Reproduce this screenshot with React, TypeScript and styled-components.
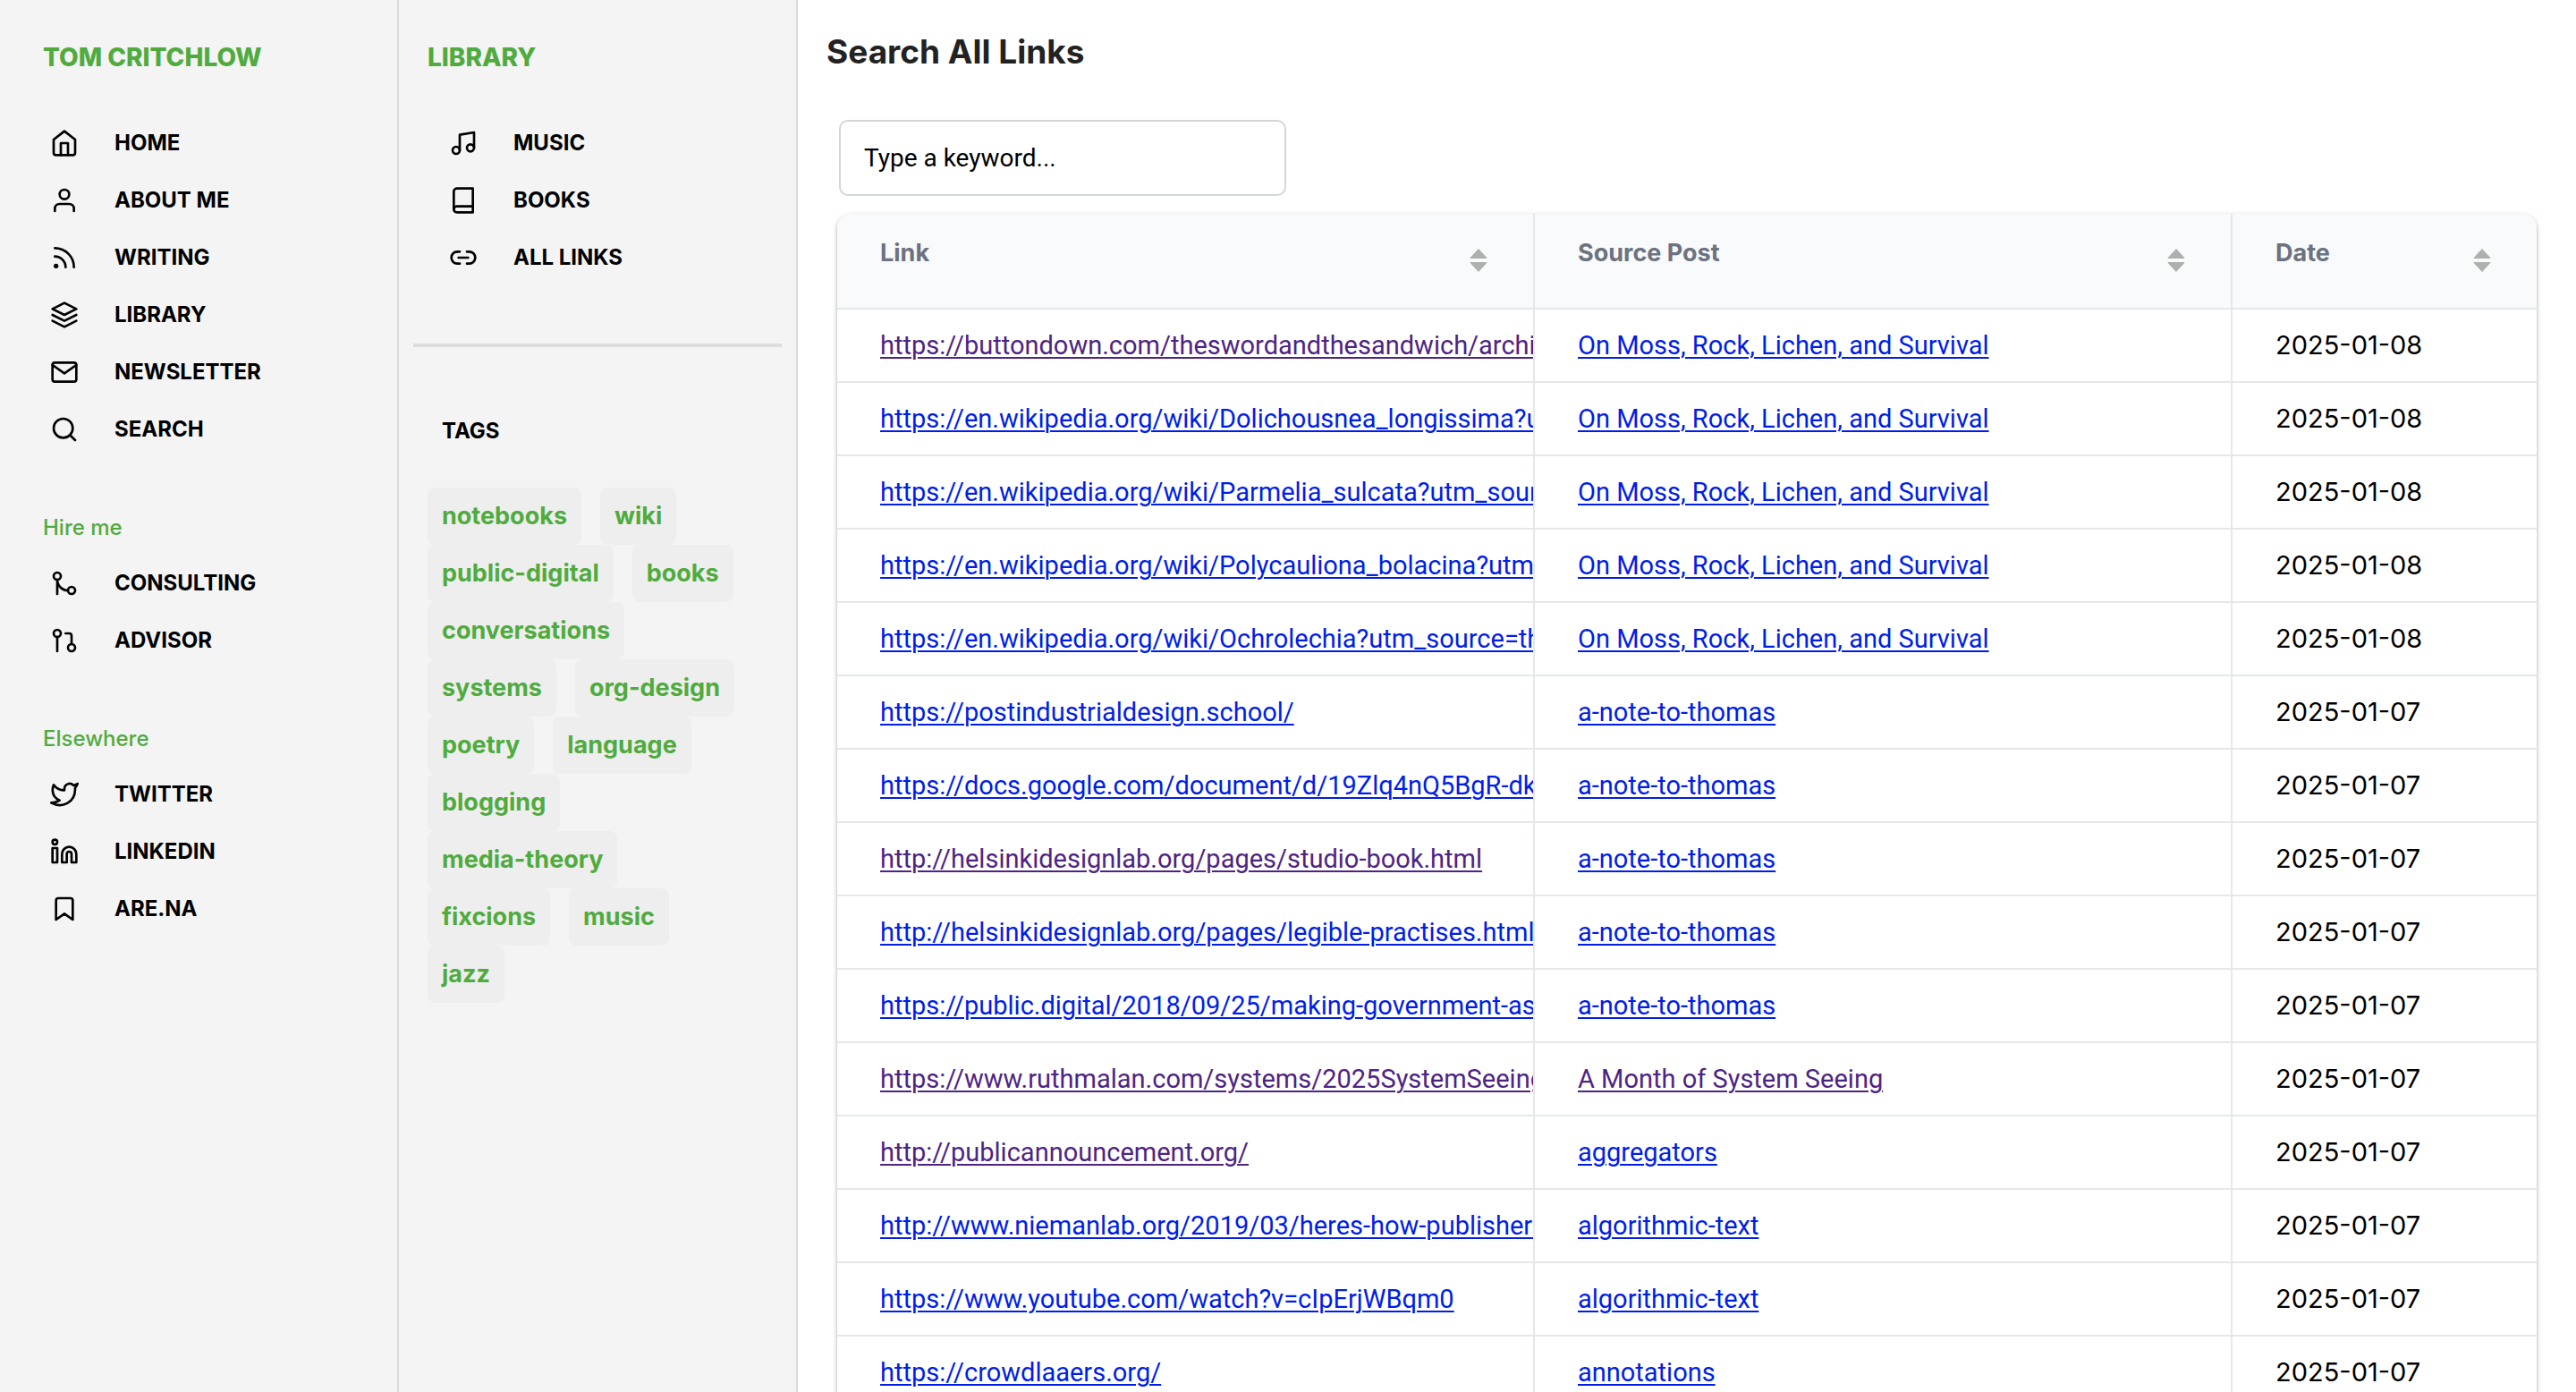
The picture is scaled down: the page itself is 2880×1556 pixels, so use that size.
import React from 'react';
import styled, { createGlobalStyle } from 'styled-components';
import type { IconType } from 'react-icons';
import {
  FiBook,
  FiBookmark,
  FiGitMerge,
  FiGitPullRequest,
  FiHome,
  FiLayers,
  FiLinkedin,
  FiMail,
  FiMusic,
  FiRss,
  FiSearch,
  FiTwitter,
  FiUser,
} from 'react-icons/fi';
import { Link2 } from 'lucide-react';

const color = {
  green: '#50ab3e',
  panel: '#f4f4f4',
  panelLine: '#d9dadb',
  tag: '#eeeeee',
  line: '#e5e7eb',
  head: '#f9fafb',
  headText: '#6b7280',
  link: '#001ee6',
  visited: '#4e2483',
};

const sans = "Inter, 'Liberation Sans', Arial, sans-serif";
const text = "Roboto, 'Liberation Sans', Arial, sans-serif";

const GlobalStyle = createGlobalStyle`
  *, *::before, *::after { box-sizing: border-box; }
  body {
    margin: 0;
    background: #fff;
    color: #000;
    font-family: ${sans};
    font-size: 28px;
    line-height: 32px;
  }
  h1, h2, h3, ul { margin: 0; padding: 0; }
  ul { list-style: none; }
`;

const Layout = styled.div`
  display: flex;
  height: 100vh;
`;

const Sidebar = styled.aside<{ $inset: number }>`
  flex: 0 0 446px;
  padding: 48px 48px 48px ${(p) => p.$inset}px;
  background: ${color.panel};
  border-right: 2px solid ${color.panelLine};
`;

const SiteTitle = styled.h2`
  margin-bottom: 48px;
  font-size: 28px;
  font-weight: 800;
  line-height: 32px;
  text-transform: uppercase;

  a {
    color: ${color.green};
    text-decoration: none;
  }
`;

const GroupTitle = styled.h3`
  margin: 62px 0 14px;
  color: ${color.green};
  font-size: 24px;
  font-weight: 500;
  line-height: 32px;
`;

const NavList = styled.ul<{ $indent: number }>`
  padding-left: ${(p) => p.$indent}px;
`;

const NavLink = styled.a`
  display: flex;
  align-items: center;
  gap: 40px;
  height: 64px;
  color: #000;
  font-size: 24px;
  font-weight: 700;
  text-decoration: none;
  text-transform: uppercase;

  svg {
    flex: none;
    width: 32px;
    height: 32px;
  }
`;

const Divider = styled.hr`
  height: 4px;
  margin: 64px -32px 62px -16px;
  border: 0;
  background: #dcdddd;
`;

const TagsTitle = styled.h3`
  margin-bottom: 31px;
  padding-left: 16px;
  font-size: 24px;
  font-weight: 700;
  line-height: 64px;
  text-transform: uppercase;
`;

const TagList = styled.ul`
  display: flex;
  flex-wrap: wrap;
  column-gap: 21px;
`;

const Tag = styled.a`
  display: block;
  padding: 0 16px;
  border-radius: 8px;
  background: ${color.tag};
  color: ${color.green};
  font-size: 27px;
  font-weight: 700;
  line-height: 64px;
  text-decoration: none;
`;

const Main = styled.main`
  flex: 1;
  min-width: 0;
  padding: 34px 32px 0;
  overflow: hidden;
`;

const PageTitle = styled.h1`
  margin-bottom: 52px;
  color: #222;
  font-size: 37px;
  font-weight: 700;
  line-height: 48px;
`;

const Grid = styled.div`
  padding: 0 12px;
`;

const SearchInput = styled.input`
  display: block;
  width: 500px;
  height: 85px;
  margin: 0 2px 20px;
  padding: 0 26px;
  border: 2px solid #d2d6dc;
  border-radius: 10px;
  background: #fff;
  font-family: ${text};
  font-size: 28px;

  &::placeholder {
    color: #000;
    opacity: 1;
  }
`;

const TableFrame = styled.div`
  overflow: hidden;
  border-radius: 16px 16px 0 0;
  box-shadow: 0 2px 6px rgba(0, 0, 0, 0.1), 0 2px 4px rgba(0, 0, 0, 0.26);
`;

const Table = styled.table`
  width: 100%;
  table-layout: fixed;
  border-collapse: separate;
  border-spacing: 0;
`;

const DateCol = styled.col`
  width: 340px;
`;

const HeadCell = styled.th`
  padding: 28px 48px 29px;
  border-bottom: 2px solid ${color.line};
  background: ${color.head};
  color: ${color.headText};
  font-size: 27px;
  font-weight: 700;
  text-align: left;

  &:not(:last-child) {
    border-right: 2px solid ${color.line};
  }
`;

const HeadContent = styled.div`
  display: flex;
  align-items: flex-start;
  justify-content: space-between;
`;

const SortButton = styled.button`
  display: flex;
  align-items: center;
  justify-content: center;
  width: 26px;
  height: 48px;
  padding: 0;
  border: 0;
  background: none;
  color: #aeb0af;
`;

const Cell = styled.td<{ $font?: string }>`
  overflow: hidden;
  padding: 24px 48px;
  border-bottom: 2px solid ${color.line};
  background: #fff;
  font-family: ${(p) => p.$font ?? text};
  font-size: 29px;
  white-space: nowrap;

  &:not(:last-child) {
    border-right: 2px solid ${color.line};
  }
`;

const CellLink = styled.a<{ $visited?: boolean }>`
  color: ${(p) => (p.$visited ? color.visited : color.link)};
  text-decoration: underline;
  text-decoration-thickness: 2px;
  text-underline-offset: 3px;
`;

type NavItem = { label: string; icon: IconType | typeof Link2 };

const mainNav: NavItem[] = [
  { label: 'Home', icon: FiHome },
  { label: 'About me', icon: FiUser },
  { label: 'Writing', icon: FiRss },
  { label: 'Library', icon: FiLayers },
  { label: 'Newsletter', icon: FiMail },
  { label: 'Search', icon: FiSearch },
];

const hireNav: NavItem[] = [
  { label: 'Consulting', icon: FiGitMerge },
  { label: 'Advisor', icon: FiGitPullRequest },
];

const elsewhereNav: NavItem[] = [
  { label: 'Twitter', icon: FiTwitter },
  { label: 'LinkedIn', icon: FiLinkedin },
  { label: 'Are.na', icon: FiBookmark },
];

const libraryNav: NavItem[] = [
  { label: 'Music', icon: FiMusic },
  { label: 'Books', icon: FiBook },
  { label: 'All links', icon: Link2 },
];

const tags = [
  'notebooks', 'wiki', 'public-digital', 'books', 'conversations', 'systems', 'org-design',
  'poetry', 'language', 'blogging', 'media-theory', 'fixcions', 'music', 'jazz',
];

type Row = { url: string; post: string; date: string; seenUrl?: boolean; seenPost?: boolean };

const moss = 'On Moss, Rock, Lichen, and Survival';

const rows: Row[] = [
  { url: 'https://buttondown.com/theswordandthesandwich/archive', post: moss, date: '2025-01-08', seenUrl: true },
  { url: 'https://en.wikipedia.org/wiki/Dolichousnea_longissima?utm', post: moss, date: '2025-01-08' },
  { url: 'https://en.wikipedia.org/wiki/Parmelia_sulcata?utm_source', post: moss, date: '2025-01-08' },
  { url: 'https://en.wikipedia.org/wiki/Polycauliona_bolacina?utm_', post: moss, date: '2025-01-08' },
  { url: 'https://en.wikipedia.org/wiki/Ochrolechia?utm_source=the', post: moss, date: '2025-01-08' },
  { url: 'https://postindustrialdesign.school/', post: 'a-note-to-thomas', date: '2025-01-07' },
  { url: 'https://docs.google.com/document/d/19Zlq4nQ5BgR-dk', post: 'a-note-to-thomas', date: '2025-01-07' },
  { url: 'http://helsinkidesignlab.org/pages/studio-book.html', post: 'a-note-to-thomas', date: '2025-01-07', seenUrl: true },
  { url: 'http://helsinkidesignlab.org/pages/legible-practises.html', post: 'a-note-to-thomas', date: '2025-01-07' },
  { url: 'https://public.digital/2018/09/25/making-government-as', post: 'a-note-to-thomas', date: '2025-01-07' },
  { url: 'https://www.ruthmalan.com/systems/2025SystemSeeing', post: 'A Month of System Seeing', date: '2025-01-07', seenUrl: true, seenPost: true },
  { url: 'http://publicannouncement.org/', post: 'aggregators', date: '2025-01-07', seenUrl: true },
  { url: 'http://www.niemanlab.org/2019/03/heres-how-publishers', post: 'algorithmic-text', date: '2025-01-07' },
  { url: 'https://www.youtube.com/watch?v=cIpErjWBqm0', post: 'algorithmic-text', date: '2025-01-07' },
  { url: 'https://crowdlaaers.org/', post: 'annotations', date: '2025-01-07' },
];

function Nav({ items, indent }: { items: NavItem[]; indent: number }) {
  return (
    <NavList $indent={indent}>
      {items.map(({ label, icon: Icon }) => (
        <li key={label}>
          <NavLink href="#">
            <Icon aria-hidden="true" />
            {label}
          </NavLink>
        </li>
      ))}
    </NavList>
  );
}

function SortIcon() {
  return (
    <svg width="20" height="26" viewBox="0 0 20 26" fill="currentColor" aria-hidden="true">
      <path d="M10 0 19.5 10.2Q19.5 11 18.6 11H1.4Q.5 11 .5 10.2Z" />
      <path d="M10 26 19.5 15.8Q19.5 15 18.6 15H1.4Q.5 15 .5 15.8Z" />
    </svg>
  );
}

export default function App() {
  return (
    <>
      <GlobalStyle />
      <Layout>
        <Sidebar $inset={48}>
          <SiteTitle><a href="#">Tom Critchlow</a></SiteTitle>
          <nav>
            <Nav items={mainNav} indent={8} />
            <GroupTitle>Hire me</GroupTitle>
            <Nav items={hireNav} indent={8} />
            <GroupTitle>Elsewhere</GroupTitle>
            <Nav items={elsewhereNav} indent={8} />
          </nav>
        </Sidebar>
        <Sidebar $inset={32}>
          <SiteTitle><a href="#">Library</a></SiteTitle>
          <nav>
            <Nav items={libraryNav} indent={24} />
          </nav>
          <Divider />
          <TagsTitle>Tags</TagsTitle>
          <TagList>
            {tags.map((tag) => (
              <li key={tag}><Tag href="#">{tag}</Tag></li>
            ))}
          </TagList>
        </Sidebar>
        <Main>
          <PageTitle>Search All Links</PageTitle>
          <Grid>
            <SearchInput type="search" aria-label="Type a keyword..." placeholder="Type a keyword..." />
            <TableFrame>
              <Table>
                <colgroup>
                  <col />
                  <col />
                  <DateCol />
                </colgroup>
                <thead>
                  <tr>
                    {['Link', 'Source Post', 'Date'].map((name) => (
                      <HeadCell key={name} scope="col">
                        <HeadContent>
                          {name}
                          <SortButton type="button" aria-label="Sort column">
                            <SortIcon />
                          </SortButton>
                        </HeadContent>
                      </HeadCell>
                    ))}
                  </tr>
                </thead>
                <tbody>
                  {rows.map((row) => (
                    <tr key={row.url}>
                      <Cell><CellLink href="#" $visited={row.seenUrl}>{row.url}</CellLink></Cell>
                      <Cell><CellLink href="#" $visited={row.seenPost}>{row.post}</CellLink></Cell>
                      <Cell $font={sans}>{row.date}</Cell>
                    </tr>
                  ))}
                </tbody>
              </Table>
            </TableFrame>
          </Grid>
        </Main>
      </Layout>
    </>
  );
}
